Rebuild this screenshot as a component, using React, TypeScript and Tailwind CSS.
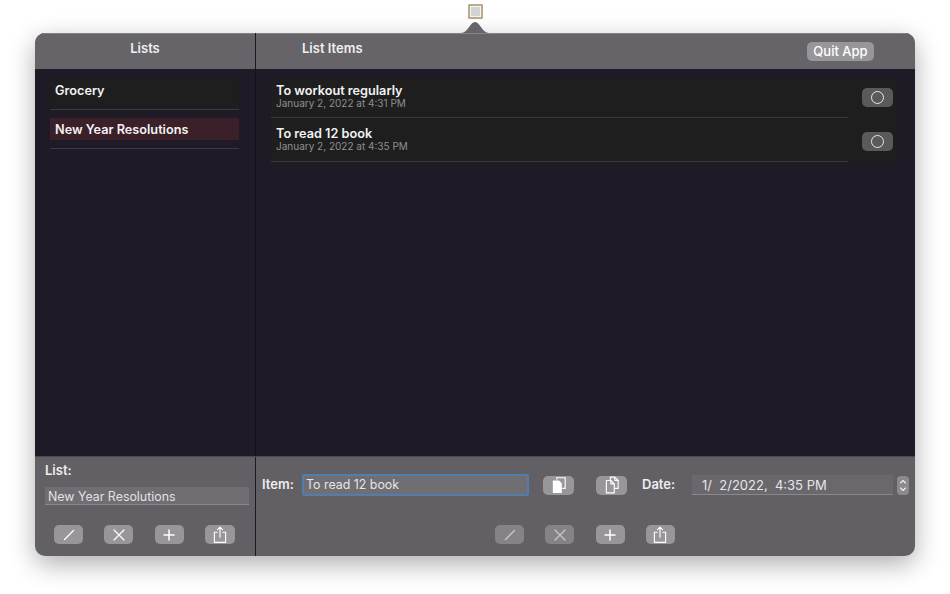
import type { ReactNode } from 'react'

const font = { fontFamily: 'Inter, "Liberation Sans", sans-serif' }

const lists = [
  { name: 'Grocery', selected: false },
  { name: 'New Year Resolutions', selected: true },
]

const items = [
  { title: 'To workout regularly', date: 'January 2, 2022 at 4:31 PM' },
  { title: 'To read 12 book', date: 'January 2, 2022 at 4:35 PM' },
]

function Pencil() {
  return (
    <svg width="14" height="14" viewBox="0 0 14 14" fill="none" stroke="currentColor" strokeWidth="1.3" strokeLinecap="round">
      <path d="M2.5 11.5 L11.5 2.5" />
    </svg>
  )
}

function Cross() {
  return (
    <svg width="14" height="14" viewBox="0 0 14 14" fill="none" stroke="currentColor" strokeWidth="1.2" strokeLinecap="round">
      <path d="M2 2 L12 12 M12 2 L2 12" />
    </svg>
  )
}

function Plus() {
  return (
    <svg width="14" height="14" viewBox="0 0 14 14" fill="none" stroke="currentColor" strokeWidth="1.5" strokeLinecap="round">
      <path d="M7 2 V12 M2 7 H12" />
    </svg>
  )
}

function Share() {
  return (
    <svg width="16" height="18" viewBox="0 0 14 16" fill="none" stroke="currentColor" strokeWidth="1" strokeLinecap="round" strokeLinejoin="round">
      <path d="M4.5 5.5 H2 V14.5 H12 V5.5 H9.5" />
      <path d="M7 10 V1 M4.8 3.2 L7 1 L9.2 3.2" />
    </svg>
  )
}

function PasteIcon() {
  return (
    <svg width="18" height="18" viewBox="0 0 16 16">
      <path d="M6 3 V1.5 H13.5 V11 H11" fill="none" stroke="currentColor" strokeWidth="1" />
      <path d="M2.5 4 H8 L10.5 6.5 V15 H2.5 Z" fill="currentColor" />
    </svg>
  )
}

function CopyIcon() {
  return (
    <svg width="18" height="18" viewBox="0 0 16 16" fill="none" stroke="currentColor" strokeWidth="1" strokeLinejoin="round">
      <path d="M6.5 3.5 V1 H10.5 L13.5 4 V11 H10.5" />
      <path d="M3 4 H7 L10 7 V15 H3 Z" />
      <path d="M7 4 V7 H10 M10.5 1 V4 H13.5" />
    </svg>
  )
}

function ToolButton({ children, dim, w = 'w-[29px]' }: { children: ReactNode; dim?: boolean; w?: string }) {
  return (
    <button className={`flex h-[19px] ${w} items-center justify-center rounded-[5px] ${dim ? 'bg-[#858388] text-[#c9c8cb]' : 'bg-[#98969b] text-white'}`}>
      {children}
    </button>
  )
}

export default function App() {
  return (
    <div style={font} className="flex h-[594px] w-[950px] flex-col items-center overflow-hidden bg-white pt-[4px]">
      {/* menu bar icon */}
      <div className="h-[15px] w-[15px] rounded-[1px] border-2 border-[#bcab8b] bg-[#d3d3d6] shadow-[inset_0_0_0_1px_#f4f4f4]" />

      {/* popover arrow */}
      <div className="relative h-[14px] w-[950px]">
        <svg className="absolute left-[459px] top-0" width="32" height="14" viewBox="0 0 32 14">
          <path d="M2 14 C9 14 11 3 16 3 C21 3 23 14 30 14 Z" fill="#676469" />
        </svg>
      </div>

      <div className="flex h-[523px] w-[880px] flex-col overflow-hidden rounded-[10px] bg-[#625f65] text-white shadow-[0_8px_26px_rgba(0,0,0,0.32)]">
        {/* header */}
        <div className="flex h-[36px] shrink-0 bg-[#666369] shadow-[inset_0_1px_0_#858387]">
          <div className="w-[221px] shrink-0 border-r border-[#1c1a20] pt-[6px] text-center text-[13px] font-semibold leading-[18px] text-[#f0f0f0]">
            Lists
          </div>
          <div className="flex flex-1 items-start justify-between pr-[41px]">
            <span className="ml-[46px] mt-[6px] text-[13px] font-semibold leading-[18px] text-[#f0f0f0]">List Items</span>
            <button className="mt-[9px] h-[19px] w-[67px] rounded-[5px] bg-[#98969b] text-[13px] font-medium leading-[19px] text-white">
              Quit App
            </button>
          </div>
        </div>

        {/* lists */}
        <div className="flex min-h-0 flex-1 bg-[#1f1b26]">
          <div className="w-[221px] shrink-0 border-r border-[#121016] pl-[15px] pr-[15px] pt-[10px]">
            {lists.map(l => (
              <div key={l.name} className="mb-[8px] mr-px h-[31px] border-b border-[#3c3a41]">
                <div className={`flex h-[22px] items-center px-[5px] pt-[2px] text-[12.7px] font-semibold text-[#f2f2f2] ${l.selected ? 'bg-[#3b1f29]' : 'bg-[#1e1e1e]'}`}>
                  {l.name}
                </div>
                {!l.selected && <div className="h-[8px] bg-[#1e1e1e]" />}
              </div>
            ))}
          </div>

          <div className="flex-1 pl-[15px] pr-[18px] pt-[10px]">
            <div className="bg-[#1e1e1e]">
              {items.map((item, i) => (
                <div key={item.title} className={`flex ${i === 0 ? 'h-[39px]' : 'h-[44px]'}`}>
                  <div className={`flex w-[577px] flex-col border-b border-[#3a3a3a] pl-[5px] ${i === 0 ? 'pt-[5px]' : 'pt-[9px]'}`}>
                    <span className="text-[12.7px] font-semibold leading-[13px] text-[#f2f2f2]">{item.title}</span>
                    <span className="text-[10px] leading-[12px] text-[#8f8f8f]">{item.date}</span>
                  </div>
                  <div className={`flex flex-1 justify-end pr-[4px] ${i === 0 ? 'pt-[9px]' : 'pt-[14px]'}`}>
                    <button className="flex h-[19px] w-[31px] items-center justify-center rounded-[5px] bg-[#5a5a5a]">
                      <span className="h-[13px] w-[13px] rounded-full border border-[#e8e8e8]" />
                    </button>
                  </div>
                </div>
              ))}
            </div>
          </div>
        </div>

        {/* footer */}
        <div className="flex h-[100px] shrink-0 border-t border-[#4a484d]">
          <div className="w-[221px] shrink-0 border-r border-[#1c1a20] pl-[10px] pr-[6px] pt-[5px]">
            <div className="text-[13px] font-semibold leading-[16px] text-[#eeeeee]">List:</div>
            <div className="mt-[9px] h-[18px] border-b border-[#8a888d] bg-[#706d73] pl-[3px] text-[12.4px] leading-[20px] text-[#e2e2e2]">
              New Year Resolutions
            </div>
            <div className="ml-[9px] mt-[20px] flex gap-[21.3px]">
              <ToolButton><Pencil /></ToolButton>
              <ToolButton><Cross /></ToolButton>
              <ToolButton><Plus /></ToolButton>
              <ToolButton w="w-[30px]"><Share /></ToolButton>
            </div>
          </div>

          <div className="flex flex-1 flex-col pl-[6px] pr-[6px] pt-[17px]">
            <div className="flex h-[22px] items-center">
              <span className="w-[40px] text-[13px] font-semibold text-[#eeeeee]">Item:</span>
              <div className="flex h-[22px] w-[227px] items-center rounded-[2px] border-2 border-[#517ead] bg-[#706d73] pl-[2px] text-[12.4px] text-[#e6e6e6]">
                To read 12 book
              </div>
              <div className="ml-[14px]">
                <ToolButton w="w-[31px]"><PasteIcon /></ToolButton>
              </div>
              <div className="ml-[22px]">
                <ToolButton w="w-[31px]"><CopyIcon /></ToolButton>
              </div>
              <span className="ml-[15px] w-[50px] text-[13px] font-semibold text-[#eeeeee]">Date:</span>
              <div className="h-[20px] w-[201px] border-b border-[#8a888d] bg-[#6a676d] pl-[10px] text-[13px] leading-[20px] text-[#e6e6e6]">
                1/&nbsp;&nbsp;2/2022,&nbsp;&nbsp;4:35 PM
              </div>
              <div className="ml-[4px] flex h-[19px] w-[12px] flex-col items-center justify-center rounded-[4px] bg-[#8c8a8f]">
                <svg width="8" height="15" viewBox="0 0 8 15" fill="none" stroke="#f0f0f0" strokeWidth="1.1" strokeLinecap="round" strokeLinejoin="round">
                  <path d="M1.5 5 L4 2.5 L6.5 5 M1.5 10 L4 12.5 L6.5 10" />
                </svg>
              </div>
            </div>

            <div className="ml-[233px] mt-[29px] flex gap-[21.3px]">
              <ToolButton dim><Pencil /></ToolButton>
              <ToolButton dim><Cross /></ToolButton>
              <ToolButton><Plus /></ToolButton>
              <ToolButton><Share /></ToolButton>
            </div>
          </div>
        </div>
      </div>
    </div>
  )
}
